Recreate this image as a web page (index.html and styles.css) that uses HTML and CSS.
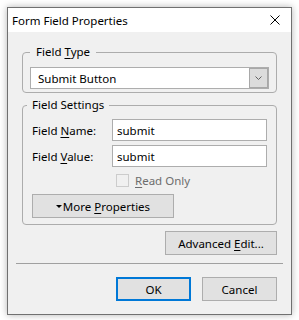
FILE: index.html
```html
<!DOCTYPE html>
<html lang="en">

<head>
    <meta charset="UTF-8" />
    <title>Form Field Properties</title>
    <link rel="stylesheet" href="styles.css">
</head>

<body>

    <div class="dialog">
        <div class="titlebar">
            <span class="title">Form Field Properties</span>
            <button class="close" aria-label="Close">
                <svg width="10" height="10" viewBox="0 0 10 10">
                    <path d="M0.5 0.5 L9.5 9.5 M9.5 0.5 L0.5 9.5" stroke="#000" stroke-width="1" fill="none" />
                </svg>
            </button>
        </div>

        <div class="content">
            <fieldset class="group group-type">
                <legend>Field <u>T</u>ype</legend>
                <div class="combo">
                    <span class="combo-value">Submit Button</span>
                    <span class="combo-btn">
                        <svg width="7" height="4" viewBox="0 0 7 4">
                            <path d="M0.5 0.5 L3.5 3.5 L6.5 0.5" stroke="#606060" stroke-width="1" fill="none" />
                        </svg>
                    </span>
                </div>
            </fieldset>

            <fieldset class="group group-settings">
                <legend>Field Settings</legend>
                <div class="field-grid">
                    <label for="fieldName">Field <u>N</u>ame:</label>
                    <input type="text" id="fieldName" value="submit" />
                    <label for="fieldValue">Field <u>V</u>alue:</label>
                    <input type="text" id="fieldValue" value="submit" />
                    <span></span>
                    <label class="check"><span class="box"></span><span><u>R</u>ead Only</span></label>
                </div>
                <button class="btn btn-more"><span class="tri"></span><span>More <u>P</u>roperties</span></button>
            </fieldset>

            <div class="row-right">
                <button class="btn btn-adv">Advanced <u>E</u>dit...</button>
            </div>

            <div class="sep"></div>

            <div class="actions">
                <button class="btn btn-ok">OK</button>
                <button class="btn">Cancel</button>
            </div>
        </div>
    </div>

</body>

</html>
```

FILE: styles.css
```css
* {
    box-sizing: border-box;
}

body {
    margin: 0;
    padding: 7px;
    background-color: #fff;
    font-family: 'Noto Sans', 'Open Sans', sans-serif;
    font-size: 11.5px;
    color: #000;
}

u {
    text-decoration: underline;
    text-underline-offset: 2px;
}

.dialog {
    width: 285px;
    height: 308px;
    background-color: #f0f0f0;
    border: 1px solid #707070;
    box-shadow: 0 0 7px rgba(0, 0, 0, 0.3);
    display: flex;
    flex-direction: column;
}

.titlebar {
    height: 24px;
    background-color: #fff;
    display: flex;
    align-items: center;
    justify-content: space-between;
    padding-left: 4px;
}

.close {
    width: 30px;
    height: 24px;
    border: none;
    background: none;
    padding: 0;
    display: flex;
    align-items: center;
    justify-content: center;
    margin-right: 1px;
}

.content {
    padding: 12px 14px 0;
    display: flex;
    flex-direction: column;
}

.group {
    margin: 0;
    border: 1px solid #acacac;
    border-radius: 4px;
    min-width: 0;
}

.group legend {
    line-height: 16px;
    padding: 0 6px;
}

.group-type {
    padding: 7px 7px 3px;
}

.group-settings {
    margin-top: 4px;
    padding: 6px 9px 6px;
}

.group-settings legend {
    margin-left: -5px;
    padding: 0 5px;
}

.combo {
    height: 22px;
    background-color: #fff;
    border: 1px solid #adadad;
    display: flex;
    align-items: stretch;
}

.combo-value {
    flex: 1;
    display: flex;
    align-items: center;
    padding-left: 7px;
}

.combo-btn {
    width: 19px;
    background-color: #dcdcdc;
    border: 1px solid #a8a8a8;
    display: flex;
    align-items: center;
    justify-content: center;
}

.field-grid {
    display: grid;
    grid-template-columns: 80px 1fr;
    grid-template-rows: 22px 22px 19px;
    row-gap: 4px;
    align-items: center;
}

.field-grid input {
    height: 22px;
    border: 1px solid #adadad;
    background-color: #fff;
    font-family: inherit;
    font-size: 11.5px;
    color: #000;
    padding: 0 4px;
    width: 100%;
}

.check {
    display: flex;
    align-items: center;
    gap: 6px;
    padding-left: 4px;
    color: #6d6d6d;
}

.box {
    width: 13px;
    height: 13px;
    border: 1px solid #cccccc;
    background-color: #f0f0f0;
}

.btn {
    height: 24px;
    background-color: #e1e1e1;
    border: 1px solid #adadad;
    font-family: inherit;
    font-size: 11.5px;
    color: #000;
    padding: 0;
}

.btn-more {
    width: 142px;
    margin-top: 4px;
    display: flex;
    align-items: center;
    justify-content: center;
}

.tri {
    border-left: 3px solid transparent;
    border-right: 3px solid transparent;
    border-top: 3px solid #000;
    margin-right: 1px;
}

.row-right {
    margin-top: 6px;
    display: flex;
    justify-content: flex-end;
}

.btn-adv {
    width: 112px;
}

.sep {
    height: 1px;
    background-color: #a0a0a0;
    margin: 8px -6px 0;
}

.actions {
    margin-top: 13px;
    display: flex;
    justify-content: flex-end;
    gap: 11px;
}

.actions .btn {
    width: 75px;
}

.btn-ok {
    border: 2px solid #0078d7;
}
```
